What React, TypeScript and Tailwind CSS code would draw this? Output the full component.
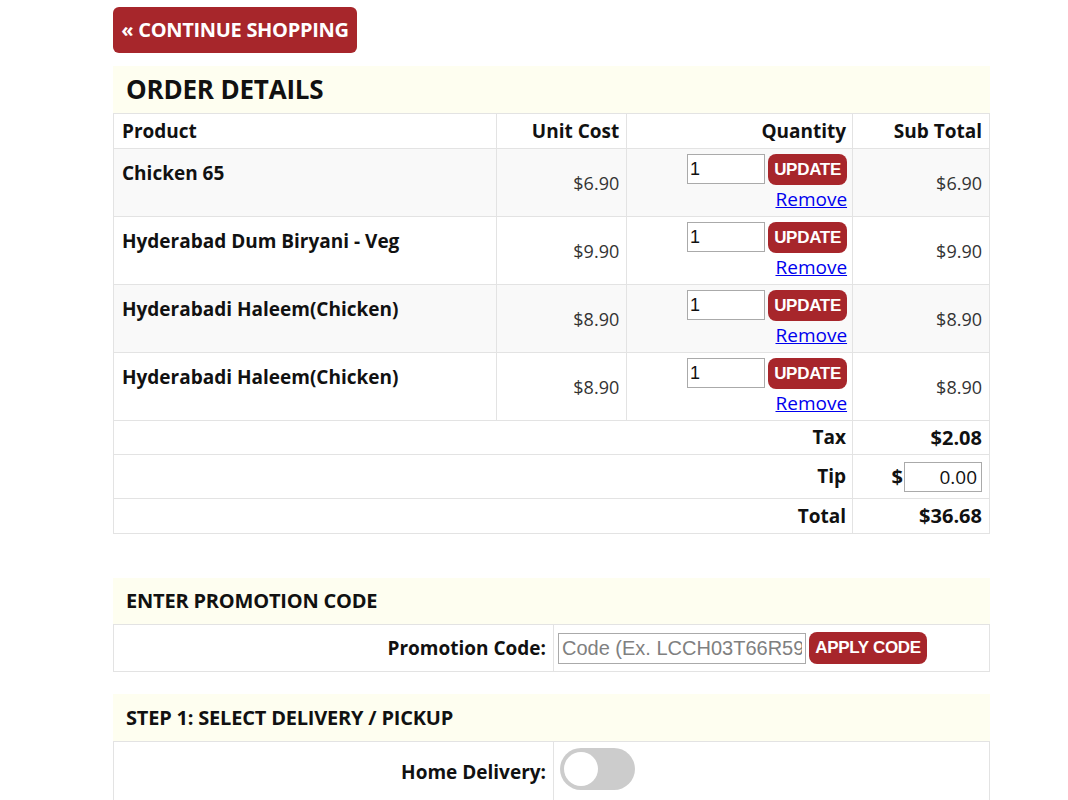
import React from "react";

const items = [
  { name: "Chicken 65", price: "$6.90", bg: "bg-[#f9f9f9]" },
  { name: "Hyderabad Dum Biryani - Veg", price: "$9.90", bg: "bg-white" },
  { name: "Hyderabadi Haleem(Chicken)", price: "$8.90", bg: "bg-[#f9f9f9]" },
  { name: "Hyderabadi Haleem(Chicken)", price: "$8.90", bg: "bg-white" },
];

const td = "border border-[#e3e3e3]";

export default function App() {
  return (
    <div className="min-h-[800px] bg-white text-[#111] font-['Open_Sans',sans-serif]">
      <div className="ml-[113px] w-[877px] pt-[7px]">
        <button className="h-[46px] w-[244px] rounded-[6px] bg-[#a7262b] text-white font-bold text-[20px] tracking-[-0.3px]">
          « CONTINUE SHOPPING
        </button>

        <div className="mt-[13px] h-[47px] bg-[#fefef0] flex items-center pl-[13px]">
          <h1 className="text-[26px] font-bold text-[#111] tracking-[-0.2px]">ORDER DETAILS</h1>
        </div>

        <table className="w-full border-collapse text-[19px]">
          <colgroup>
            <col className="w-[384px]" />
            <col className="w-[130px]" />
            <col className="w-[226px]" />
            <col className="w-[137px]" />
          </colgroup>
          <thead>
            <tr className="h-[35px] bg-white">
              <th className={`${td} text-left px-[8px] font-bold`}>Product</th>
              <th className={`${td} text-right px-[7px] font-bold`}>Unit Cost</th>
              <th className={`${td} text-right px-[6px] font-bold`}>Quantity</th>
              <th className={`${td} text-right px-[7px] font-bold`}>Sub Total</th>
            </tr>
          </thead>
          <tbody>
            {items.map((it, i) => (
              <tr key={i} className={`h-[68px] ${it.bg}`}>
                <td className={`${td} align-top px-[8px] pt-[10px] font-bold`}>{it.name}</td>
                <td className={`${td} text-right px-[7px] align-middle text-[#333] text-[18px] pt-[1px]`}>{it.price}</td>
                <td className={`${td} align-top pt-[5px] pl-[6px] pr-[5px]`}>
                  <div className="flex justify-end items-start gap-[3px]">
                    <input
                      defaultValue="1"
                      className="w-[78px] h-[30px] border border-[#aaa] px-[2px] text-[18px] font-['Liberation_Sans',sans-serif] bg-white outline-none"
                    />
                    <button className="w-[79px] h-[31px] rounded-[8px] bg-[#a7262b] text-white font-bold text-[17px] font-['Liberation_Sans',sans-serif] tracking-[-0.3px]">
                      UPDATE
                    </button>
                  </div>
                  <div className="text-right leading-[22px] mt-[3px]">
                    <a href="#" className="text-[#0000ee] underline">Remove</a>
                  </div>
                </td>
                <td className={`${td} text-right px-[7px] align-middle text-[#333] text-[18px] pt-[1px]`}>{it.price}</td>
              </tr>
            ))}
            <tr className="h-[34px]">
              <td colSpan={3} className={`${td} text-right px-[6px] font-bold`}>Tax</td>
              <td className={`${td} text-right px-[7px] font-bold text-[20px]`}>$2.08</td>
            </tr>
            <tr className="h-[44px]">
              <td colSpan={3} className={`${td} text-right px-[6px] font-bold`}>Tip</td>
              <td className={`${td} text-right px-[7px]`}>
                <div className="flex justify-end items-center gap-[1px] font-bold text-[20px]">
                  <span>$</span>
                  <input
                    defaultValue="0.00"
                    className="w-[78px] h-[30px] border border-[#aaa] px-[4px] text-right text-[19px] font-normal bg-white outline-none"
                  />
                </div>
              </td>
            </tr>
            <tr className="h-[35px]">
              <td colSpan={3} className={`${td} text-right px-[6px] font-bold`}>Total</td>
              <td className={`${td} text-right px-[7px] font-bold text-[20px]`}>$36.68</td>
            </tr>
          </tbody>
        </table>

        <div className="mt-[44px] h-[46px] bg-[#fefef0] flex items-center pl-[13px]">
          <h2 className="text-[20px] font-bold tracking-[-0.2px]">ENTER PROMOTION CODE</h2>
        </div>
        <table className="w-full border-collapse text-[19px]">
          <colgroup>
            <col className="w-[440px]" />
            <col />
          </colgroup>
          <tbody>
            <tr className="h-[47px]">
              <td className={`${td} text-right px-[7px] font-bold`}>Promotion Code:</td>
              <td className={`${td} px-[4px]`}>
                <div className="flex items-center gap-[3px]">
                  <input
                    placeholder="Code (Ex. LCCH03T66R59)"
                    className="w-[248px] h-[31px] border border-[#aaa] px-[3px] text-[20px] font-['Liberation_Sans',sans-serif] placeholder:text-[#808080] bg-white outline-none"
                  />
                  <button className="w-[118px] h-[32px] rounded-[8px] bg-[#a7262b] text-white font-bold text-[17px] font-['Liberation_Sans',sans-serif] tracking-[-0.3px]">
                    APPLY CODE
                  </button>
                </div>
              </td>
            </tr>
          </tbody>
        </table>

        <div className="mt-[22px] h-[47px] bg-[#fefef0] flex items-center pl-[13px]">
          <h2 className="text-[20px] font-bold tracking-[-0.2px]">STEP 1: SELECT DELIVERY / PICKUP</h2>
        </div>
        <table className="w-full border-collapse text-[19px]">
          <colgroup>
            <col className="w-[440px]" />
            <col />
          </colgroup>
          <tbody>
            <tr className="h-[62px]">
              <td className={`${td} text-right px-[7px] font-bold`}>Home Delivery:</td>
              <td className={`${td} px-[6px] align-top pt-[6px]`}>
                <div className="w-[75px] h-[42px] rounded-full bg-[#cccccc] flex items-center pl-[4px]">
                  <div className="w-[34px] h-[34px] rounded-full bg-white" />
                </div>
              </td>
            </tr>
          </tbody>
        </table>
      </div>
    </div>
  );
}
